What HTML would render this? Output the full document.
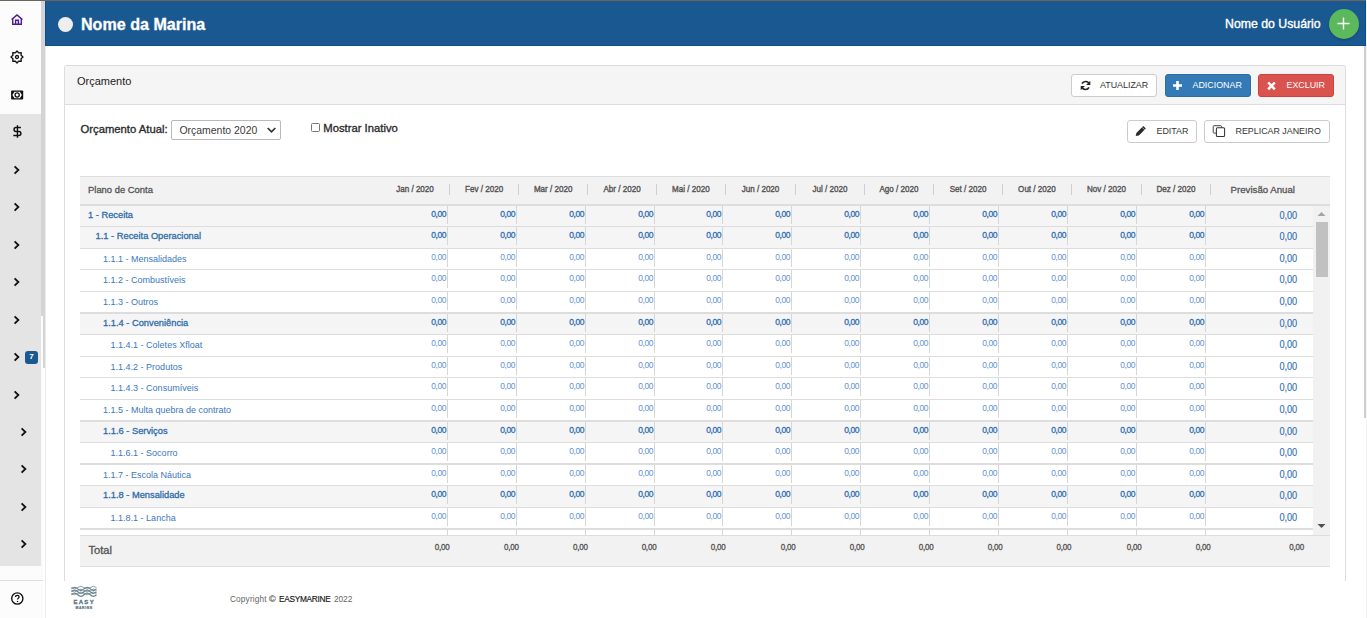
<!DOCTYPE html>
<html><head><meta charset="utf-8">
<style>
*{margin:0;padding:0;box-sizing:border-box}
html,body{width:1367px;height:618px;overflow:hidden;background:#fff;font-family:"Liberation Sans",sans-serif;color:#333}
.a{position:absolute}
#topline{left:0;top:0;width:1366px;height:1px;background:#6b645d}
#side{left:0;top:1px;width:41px;height:617px;background:#fcfcfc}
#sidegrey{left:0;top:114px;width:41px;height:452px;background:#e4e4e4}
#sidehr{left:0;top:580px;width:43px;height:1px;background:#dedede}
#sb1{left:41px;top:1px;width:4px;height:315px;background:#d4d4d4}
#sb2{left:43px;top:316px;width:2px;height:52px;background:#d4d4d4}
#sb3{left:41px;top:316px;width:2px;height:302px;background:#fbfbfb}
#sbline{left:45px;top:46px;width:1px;height:572px;background:#ececec}
#hdr{left:45px;top:1px;width:1321px;height:45px;background:#1a5891;border:1px solid #0f4d8c;border-top:none}
#hdrc{left:57.5px;top:16.5px;width:15px;height:15px;border-radius:50%;background:#eeeeee}
#hdrt{left:81px;top:13.6px;font-size:16.1px;font-weight:bold;color:#fff;line-height:20px;-webkit-text-stroke:0.3px #fff}
#user{left:1225px;top:15.7px;font-size:12.3px;color:#fff;line-height:16px;-webkit-text-stroke:0.35px #fff}
#plus{left:1329px;top:9px;width:30px;height:30px;border-radius:50%;background:#5cb85c;box-shadow:0 1px 2px rgba(0,0,0,.25)}
#pgsb{left:1364px;top:46px;width:2px;height:372px;background:#cdcdcd}
#rightedge{left:1366px;top:1px;width:1px;height:617px;background:#f3f3f3}
#panel{left:64px;top:65px;width:1282px;height:516px;border:1px solid #dddddd;border-bottom:none;border-radius:3px 3px 0 0}
#ph{left:65px;top:66px;width:1280px;height:39px;background:#f5f5f5;border-bottom:1px solid #dddddd;border-radius:2px 2px 0 0}
#ptitle{left:77px;top:74px;font-size:11px;line-height:14px;color:#222}
.btn{position:absolute;height:23px;border:1px solid #cccccc;border-radius:3px;background:#fff;font-size:8.9px;color:#333;line-height:21px}
.btn span{position:absolute;top:0}
.bp{background:#337ab7;border-color:#2e6da4;color:#fff}
.bd{background:#d9534f;border-color:#d43f3a;color:#fff}
.lbl{font-size:11.27px;color:#2a2a2a;line-height:14px;-webkit-text-stroke:0.32px #2a2a2a}
#sel{left:171px;top:120px;width:110px;height:20px;border:1px solid #b9b9b9;border-radius:2px;background:#fff}
#seltxt{left:179.5px;top:123.5px;font-size:10.45px;line-height:14px;color:#3a3a3a}
#chk{left:311px;top:123px;width:9px;height:9px;border:1px solid #767676;border-radius:1.5px;background:#fff}
#tbl{left:80px;top:176px;width:1250px;height:391px}
#th{left:0;top:0;width:1250px;height:30px;background:#f2f2f2;border-top:1px solid #dddddd;border-bottom:2px solid #dddddd}
.hpc{position:absolute;left:8px;top:6.8px;font-size:9.43px;color:#555;line-height:12px;-webkit-text-stroke:0.3px #555}
.hm{position:absolute;top:7.9px;font-size:8.07px;color:#555;line-height:10px;text-align:center;white-space:nowrap;-webkit-text-stroke:0.35px #555}
.hs{position:absolute;top:7.2px;width:1px;height:11px;background:#cfcfcf}
.hpa{position:absolute;left:1150.6px;top:7px;font-size:9.67px;color:#555;line-height:12px;-webkit-text-stroke:0.3px #555}
#bd{left:0;top:0;width:1233px;height:359px;overflow:hidden}
.ln{position:absolute;left:0;width:1233px;background:#dddddd}
.r{position:absolute;left:0;width:1233px;background:#fff}
.r.b{background:#f5f5f5}
.nm{position:absolute;top:3.9px;font-size:9px;line-height:12px;color:#3a78bb;white-space:nowrap}
.b .nm{font-size:9.3px;color:#2f6cab;top:2.6px;-webkit-text-stroke:0.3px #2f6cab}
.v{position:absolute;top:0;width:1px;height:18px;background:#d6d6d6}
.n{position:absolute;top:3.3px;font-size:8.5px;line-height:10px;letter-spacing:-0.4px;color:#6393cf}
.b .n{color:#2f6fb2;-webkit-text-stroke:0.3px #2f6fb2}
.pa{position:absolute;right:16px;top:3.9px;font-size:9.2px;line-height:12px;letter-spacing:-0.1px;color:#2f6fb5;-webkit-text-stroke:0.12px #2f6fb5}
#scr{left:1233px;top:30px;width:17px;height:329px;background:#f1f1f1}
#thumb{left:1235.5px;top:46px;width:12.5px;height:55px;background:#c1c1c1}
#tf{left:0;top:359px;width:1250px;height:32px;background:#f2f2f2;border-top:1px solid #dddddd;border-bottom:1px solid #dddddd}
.tt{position:absolute;left:8.5px;top:8.3px;font-size:11.1px;color:#555;line-height:12px;-webkit-text-stroke:0.32px #555}
.tn{position:absolute;top:6.8px;font-size:8px;letter-spacing:-0.2px;color:#555;line-height:10px;-webkit-text-stroke:0.3px #555}
.cp{top:593px;font-size:8.3px;line-height:12px;color:#666;white-space:nowrap}
.chev{position:absolute;width:8px;height:10px}
.n{transform:scaleY(1.13);transform-origin:50% 7.94px}
.hm{transform:scaleY(1.13);transform-origin:50% 7.79px}
.tn{transform:scaleY(1.13);transform-origin:50% 7.77px}
.pa{transform:scaleY(1.1);transform-origin:50% 9.19px}
</style></head><body>
<div class="a" id="topline"></div>
<div class="a" id="side"></div>
<div class="a" id="sidegrey"></div>
<div class="a" id="sb1"></div><div class="a" id="sb2"></div><div class="a" id="sb3"></div>
<div class="a" id="sidehr"></div>
<div class="a" id="sbline"></div>
<!-- sidebar icons -->
<svg class="a" style="left:9px;top:12px" width="16" height="15" viewBox="0 0 16 15"><path d="M2.6 7.6 L8 3 L13.4 7.6 M3.7 6.8 V12.3 H12.3 V6.8 M6.6 12.3 V8.3 H9.4 V12.3" fill="none" stroke="#4b1b8f" stroke-width="1.4" stroke-linejoin="miter"/></svg>
<svg class="a" style="left:9.3px;top:48.7px" width="16" height="16" viewBox="0 0 16 16"><path d="M8.00 2.00 L9.68 3.93 L12.24 3.76 L12.07 6.32 L14.00 8.00 L12.07 9.68 L12.24 12.24 L9.68 12.07 L8.00 14.00 L6.32 12.07 L3.76 12.24 L3.93 9.68 L2.00 8.00 L3.93 6.32 L3.76 3.76 L6.32 3.93 Z" fill="none" stroke="#111" stroke-width="1.35" stroke-linejoin="round"/><circle cx="8" cy="8" r="1.5" fill="none" stroke="#111" stroke-width="1.3"/></svg>
<svg class="a" style="left:9px;top:86.5px" width="16" height="16" viewBox="0 0 16 16"><rect x="2.1" y="3.4" width="12.1" height="9.1" rx="0.9" fill="#111"/><path d="M3.4 8 L5.5 4.7 H10.8 L12.9 8 L10.8 11.2 H5.5 Z" fill="#fff"/><circle cx="8.15" cy="8" r="2.1" fill="none" stroke="#111" stroke-width="1.3"/></svg>
<svg class="a" style="left:11px;top:124px" width="12" height="15" viewBox="0 0 12 15"><path d="M9.9 3.5 H5.0 A1.95 1.95 0 0 0 5.0 7.4 H7.9 A2.0 2.0 0 0 1 7.9 11.4 H2.3" fill="none" stroke="#111" stroke-width="1.45"/><path d="M6.45 1.2 V13.8" stroke="#111" stroke-width="1.4"/></svg>
<svg class="a" style="left:13.2px;top:164.8px" width="8" height="10" viewBox="0 0 8 10"><path d="M1.6 1.3 L5.4 5 L1.6 8.7" fill="none" stroke="#111" stroke-width="1.8"/></svg><svg class="a" style="left:13.2px;top:202.3px" width="8" height="10" viewBox="0 0 8 10"><path d="M1.6 1.3 L5.4 5 L1.6 8.7" fill="none" stroke="#111" stroke-width="1.8"/></svg><svg class="a" style="left:13.2px;top:239.8px" width="8" height="10" viewBox="0 0 8 10"><path d="M1.6 1.3 L5.4 5 L1.6 8.7" fill="none" stroke="#111" stroke-width="1.8"/></svg><svg class="a" style="left:13.2px;top:277.3px" width="8" height="10" viewBox="0 0 8 10"><path d="M1.6 1.3 L5.4 5 L1.6 8.7" fill="none" stroke="#111" stroke-width="1.8"/></svg><svg class="a" style="left:13.2px;top:314.8px" width="8" height="10" viewBox="0 0 8 10"><path d="M1.6 1.3 L5.4 5 L1.6 8.7" fill="none" stroke="#111" stroke-width="1.8"/></svg><svg class="a" style="left:13.2px;top:352px" width="8" height="10" viewBox="0 0 8 10"><path d="M1.6 1.3 L5.4 5 L1.6 8.7" fill="none" stroke="#111" stroke-width="1.8"/></svg><svg class="a" style="left:13.2px;top:389.8px" width="8" height="10" viewBox="0 0 8 10"><path d="M1.6 1.3 L5.4 5 L1.6 8.7" fill="none" stroke="#111" stroke-width="1.8"/></svg><svg class="a" style="left:20.2px;top:427px" width="8" height="10" viewBox="0 0 8 10"><path d="M1.6 1.3 L5.4 5 L1.6 8.7" fill="none" stroke="#111" stroke-width="1.8"/></svg><svg class="a" style="left:20.2px;top:464px" width="8" height="10" viewBox="0 0 8 10"><path d="M1.6 1.3 L5.4 5 L1.6 8.7" fill="none" stroke="#111" stroke-width="1.8"/></svg><svg class="a" style="left:20.2px;top:501.5px" width="8" height="10" viewBox="0 0 8 10"><path d="M1.6 1.3 L5.4 5 L1.6 8.7" fill="none" stroke="#111" stroke-width="1.8"/></svg><svg class="a" style="left:20.2px;top:539px" width="8" height="10" viewBox="0 0 8 10"><path d="M1.6 1.3 L5.4 5 L1.6 8.7" fill="none" stroke="#111" stroke-width="1.8"/></svg>
<div class="a" style="left:25px;top:351px;width:13px;height:13px;border-radius:3px;background:#1a5891;color:#fff;font-size:8px;font-weight:bold;line-height:11.5px;text-align:center">7</div>
<svg class="a" style="left:10px;top:591px" width="15" height="15" viewBox="0 0 15 15"><circle cx="7.3" cy="7.5" r="5.6" fill="none" stroke="#111" stroke-width="1.4"/><path d="M5.5 6.1 C5.5 4.9 6.3 4.3 7.3 4.3 C8.3 4.3 9.1 5 9.1 5.9 C9.1 7.1 7.5 7.2 7.5 8.6" fill="none" stroke="#111" stroke-width="1.3"/><circle cx="7.5" cy="10.4" r="0.75" fill="#111"/></svg>
<!-- header -->
<div class="a" id="hdr"></div>
<div class="a" id="hdrc"></div>
<div class="a" id="hdrt">Nome da Marina</div>
<div class="a" id="user">Nome do Usuário</div>
<div class="a" id="plus"></div>
<svg class="a" style="left:1337px;top:17px" width="13" height="13" viewBox="0 0 13 13"><path d="M6.5 0.5 V12.5 M0.5 6.5 H12.5" stroke="#fff" stroke-width="1.4"/></svg>
<div class="a" id="pgsb"></div>
<div class="a" id="rightedge"></div>
<!-- panel -->
<div class="a" id="panel"></div>
<div class="a" id="ph"></div>
<div class="a" id="ptitle">Orçamento</div>
<div class="btn" style="left:1071px;top:74px;width:86px">
 <svg class="a" style="left:8px;top:5px" width="11" height="11" viewBox="0 0 11 11"><path d="M9.3 4.2 A4 4 0 0 0 2 3.6 M1.7 6.8 A4 4 0 0 0 9 7.4" fill="none" stroke="#222" stroke-width="1.7"/><path d="M10.3 0.8 V5 H6.1 Z M0.7 10.2 V6 H4.9 Z" fill="#222"/></svg>
 <span style="left:28px">ATUALIZAR</span></div>
<div class="btn bp" style="left:1165px;top:74px;width:86px">
 <svg class="a" style="left:6px;top:5px" width="11" height="11" viewBox="0 0 11 11"><path d="M5.5 1 V10 M1 5.5 H10" stroke="#fff" stroke-width="2.6"/></svg>
 <span style="left:26.5px">ADICIONAR</span></div>
<div class="btn bd" style="left:1258px;top:74px;width:76px">
 <svg class="a" style="left:6.5px;top:6px" width="11" height="10" viewBox="0 0 11 10"><path d="M2.2 1.5 L8.8 8.3 M8.8 1.5 L2.2 8.3" stroke="#fff" stroke-width="2.5"/></svg>
 <span style="left:27.5px">EXCLUIR</span></div>
<div class="a lbl" style="left:80.5px;top:122px">Orçamento Atual:</div>
<div class="a" id="sel"></div>
<div class="a" id="seltxt">Orçamento 2020</div>
<svg class="a" style="left:265.5px;top:126px" width="11" height="8" viewBox="0 0 11 8"><path d="M1.7 2 L5.5 5.8 L9.3 2" fill="none" stroke="#333" stroke-width="1.75"/></svg>
<div class="a" id="chk"></div>
<div class="a lbl" style="left:323.3px;top:121px">Mostrar Inativo</div>
<div class="btn" style="left:1127px;top:120px;width:70px">
 <svg class="a" style="left:5.6px;top:4.1px" width="13" height="13" viewBox="0 0 13 13"><path d="M1.7 11.1 L2.4 8 L9.3 1.1 L11.8 3.6 L4.9 10.4 Z" fill="#2a2a2a"/><path d="M8.1 2.3 L10.6 4.8" stroke="#fff" stroke-width="0.6"/></svg>
 <span style="left:28.5px">EDITAR</span></div>
<div class="btn" style="left:1204px;top:120px;width:126px">
 <svg class="a" style="left:6px;top:3.4px" width="15" height="14" viewBox="0 0 15 14"><rect x="2.2" y="1.7" width="8.4" height="7.4" rx="0.8" fill="none" stroke="#444" stroke-width="1"/><rect x="5.4" y="3.8" width="8.2" height="8.7" rx="1" fill="#fff" stroke="#333" stroke-width="1.05"/></svg>
 <span style="left:30.5px">REPLICAR JANEIRO</span></div>
<!-- table -->
<div class="a" id="tbl">
 <div class="a" id="th"><span class="hpc">Plano de Conta</span><span class="hm" style="left:300.4px;width:69.20000000000005px">Jan / 2020</span><span class="hs" style="left:369px"></span><span class="hm" style="left:369.6px;width:69.10000000000002px">Fev / 2020</span><span class="hs" style="left:438px"></span><span class="hm" style="left:438.70000000000005px;width:69.0px">Mar / 2020</span><span class="hs" style="left:507px"></span><span class="hm" style="left:507.70000000000005px;width:68.69999999999993px">Abr / 2020</span><span class="hs" style="left:576px"></span><span class="hm" style="left:576.4px;width:69.10000000000002px">Mai / 2020</span><span class="hs" style="left:645px"></span><span class="hm" style="left:645.5px;width:70.0px">Jun / 2020</span><span class="hs" style="left:715px"></span><span class="hm" style="left:715.5px;width:69.0px">Jul / 2020</span><span class="hs" style="left:784px"></span><span class="hm" style="left:784.5px;width:69.0px">Ago / 2020</span><span class="hs" style="left:853px"></span><span class="hm" style="left:853.5px;width:69.10000000000002px">Set / 2020</span><span class="hs" style="left:922px"></span><span class="hm" style="left:922.6px;width:68.69999999999993px">Out / 2020</span><span class="hs" style="left:991px"></span><span class="hm" style="left:991.3px;width:70.20000000000005px">Nov / 2020</span><span class="hs" style="left:1061px"></span><span class="hm" style="left:1061.5px;width:69.0px">Dez / 2020</span><span class="hs" style="left:1130px"></span><span class="hpa">Previsão Anual</span></div>
 <div class="a" id="bd">
<div class="ln" style="top:28px;height:2px"></div><div class="r b" style="top:30px;height:20px"><span class="nm" style="left:8px">1 - Receita</span><span class="v" style="left:367px"></span><span class="n" style="right:866.8px">0,00</span><span class="v" style="left:436px"></span><span class="n" style="right:797.8px">0,00</span><span class="v" style="left:505px"></span><span class="n" style="right:728.8px">0,00</span><span class="v" style="left:574px"></span><span class="n" style="right:659.8px">0,00</span><span class="v" style="left:642px"></span><span class="n" style="right:591.8px">0,00</span><span class="v" style="left:711px"></span><span class="n" style="right:522.8px">0,00</span><span class="v" style="left:780px"></span><span class="n" style="right:453.8px">0,00</span><span class="v" style="left:849px"></span><span class="n" style="right:384.8px">0,00</span><span class="v" style="left:918px"></span><span class="n" style="right:315.8px">0,00</span><span class="v" style="left:987px"></span><span class="n" style="right:246.8px">0,00</span><span class="v" style="left:1056px"></span><span class="n" style="right:177.8px">0,00</span><span class="v" style="left:1125px"></span><span class="n" style="right:108.8px">0,00</span><span class="pa">0,00</span></div>
<div class="ln" style="top:50px;height:1px"></div><div class="r b" style="top:51px;height:21px"><span class="nm" style="left:15.599999999999994px">1.1 - Receita Operacional</span><span class="v" style="left:367px"></span><span class="n" style="right:866.8px">0,00</span><span class="v" style="left:436px"></span><span class="n" style="right:797.8px">0,00</span><span class="v" style="left:505px"></span><span class="n" style="right:728.8px">0,00</span><span class="v" style="left:574px"></span><span class="n" style="right:659.8px">0,00</span><span class="v" style="left:642px"></span><span class="n" style="right:591.8px">0,00</span><span class="v" style="left:711px"></span><span class="n" style="right:522.8px">0,00</span><span class="v" style="left:780px"></span><span class="n" style="right:453.8px">0,00</span><span class="v" style="left:849px"></span><span class="n" style="right:384.8px">0,00</span><span class="v" style="left:918px"></span><span class="n" style="right:315.8px">0,00</span><span class="v" style="left:987px"></span><span class="n" style="right:246.8px">0,00</span><span class="v" style="left:1056px"></span><span class="n" style="right:177.8px">0,00</span><span class="v" style="left:1125px"></span><span class="n" style="right:108.8px">0,00</span><span class="pa">0,00</span></div>
<div class="ln" style="top:72px;height:1px"></div><div class="r" style="top:73px;height:20px"><span class="nm" style="left:23px">1.1.1 - Mensalidades</span><span class="v" style="left:367px"></span><span class="n" style="right:866.8px">0,00</span><span class="v" style="left:436px"></span><span class="n" style="right:797.8px">0,00</span><span class="v" style="left:505px"></span><span class="n" style="right:728.8px">0,00</span><span class="v" style="left:574px"></span><span class="n" style="right:659.8px">0,00</span><span class="v" style="left:642px"></span><span class="n" style="right:591.8px">0,00</span><span class="v" style="left:711px"></span><span class="n" style="right:522.8px">0,00</span><span class="v" style="left:780px"></span><span class="n" style="right:453.8px">0,00</span><span class="v" style="left:849px"></span><span class="n" style="right:384.8px">0,00</span><span class="v" style="left:918px"></span><span class="n" style="right:315.8px">0,00</span><span class="v" style="left:987px"></span><span class="n" style="right:246.8px">0,00</span><span class="v" style="left:1056px"></span><span class="n" style="right:177.8px">0,00</span><span class="v" style="left:1125px"></span><span class="n" style="right:108.8px">0,00</span><span class="pa">0,00</span></div>
<div class="ln" style="top:93px;height:1px"></div><div class="r" style="top:94px;height:21px"><span class="nm" style="left:23px">1.1.2 - Combustíveis</span><span class="v" style="left:367px"></span><span class="n" style="right:866.8px">0,00</span><span class="v" style="left:436px"></span><span class="n" style="right:797.8px">0,00</span><span class="v" style="left:505px"></span><span class="n" style="right:728.8px">0,00</span><span class="v" style="left:574px"></span><span class="n" style="right:659.8px">0,00</span><span class="v" style="left:642px"></span><span class="n" style="right:591.8px">0,00</span><span class="v" style="left:711px"></span><span class="n" style="right:522.8px">0,00</span><span class="v" style="left:780px"></span><span class="n" style="right:453.8px">0,00</span><span class="v" style="left:849px"></span><span class="n" style="right:384.8px">0,00</span><span class="v" style="left:918px"></span><span class="n" style="right:315.8px">0,00</span><span class="v" style="left:987px"></span><span class="n" style="right:246.8px">0,00</span><span class="v" style="left:1056px"></span><span class="n" style="right:177.8px">0,00</span><span class="v" style="left:1125px"></span><span class="n" style="right:108.8px">0,00</span><span class="pa">0,00</span></div>
<div class="ln" style="top:115px;height:1px"></div><div class="r" style="top:116px;height:20px"><span class="nm" style="left:23px">1.1.3 - Outros</span><span class="v" style="left:367px"></span><span class="n" style="right:866.8px">0,00</span><span class="v" style="left:436px"></span><span class="n" style="right:797.8px">0,00</span><span class="v" style="left:505px"></span><span class="n" style="right:728.8px">0,00</span><span class="v" style="left:574px"></span><span class="n" style="right:659.8px">0,00</span><span class="v" style="left:642px"></span><span class="n" style="right:591.8px">0,00</span><span class="v" style="left:711px"></span><span class="n" style="right:522.8px">0,00</span><span class="v" style="left:780px"></span><span class="n" style="right:453.8px">0,00</span><span class="v" style="left:849px"></span><span class="n" style="right:384.8px">0,00</span><span class="v" style="left:918px"></span><span class="n" style="right:315.8px">0,00</span><span class="v" style="left:987px"></span><span class="n" style="right:246.8px">0,00</span><span class="v" style="left:1056px"></span><span class="n" style="right:177.8px">0,00</span><span class="v" style="left:1125px"></span><span class="n" style="right:108.8px">0,00</span><span class="pa">0,00</span></div>
<div class="ln" style="top:136px;height:2px"></div><div class="r b" style="top:138px;height:20px"><span class="nm" style="left:23px">1.1.4 - Conveniência</span><span class="v" style="left:367px"></span><span class="n" style="right:866.8px">0,00</span><span class="v" style="left:436px"></span><span class="n" style="right:797.8px">0,00</span><span class="v" style="left:505px"></span><span class="n" style="right:728.8px">0,00</span><span class="v" style="left:574px"></span><span class="n" style="right:659.8px">0,00</span><span class="v" style="left:642px"></span><span class="n" style="right:591.8px">0,00</span><span class="v" style="left:711px"></span><span class="n" style="right:522.8px">0,00</span><span class="v" style="left:780px"></span><span class="n" style="right:453.8px">0,00</span><span class="v" style="left:849px"></span><span class="n" style="right:384.8px">0,00</span><span class="v" style="left:918px"></span><span class="n" style="right:315.8px">0,00</span><span class="v" style="left:987px"></span><span class="n" style="right:246.8px">0,00</span><span class="v" style="left:1056px"></span><span class="n" style="right:177.8px">0,00</span><span class="v" style="left:1125px"></span><span class="n" style="right:108.8px">0,00</span><span class="pa">0,00</span></div>
<div class="ln" style="top:158px;height:1px"></div><div class="r" style="top:159px;height:21px"><span class="nm" style="left:30.599999999999994px">1.1.4.1 - Coletes Xfloat</span><span class="v" style="left:367px"></span><span class="n" style="right:866.8px">0,00</span><span class="v" style="left:436px"></span><span class="n" style="right:797.8px">0,00</span><span class="v" style="left:505px"></span><span class="n" style="right:728.8px">0,00</span><span class="v" style="left:574px"></span><span class="n" style="right:659.8px">0,00</span><span class="v" style="left:642px"></span><span class="n" style="right:591.8px">0,00</span><span class="v" style="left:711px"></span><span class="n" style="right:522.8px">0,00</span><span class="v" style="left:780px"></span><span class="n" style="right:453.8px">0,00</span><span class="v" style="left:849px"></span><span class="n" style="right:384.8px">0,00</span><span class="v" style="left:918px"></span><span class="n" style="right:315.8px">0,00</span><span class="v" style="left:987px"></span><span class="n" style="right:246.8px">0,00</span><span class="v" style="left:1056px"></span><span class="n" style="right:177.8px">0,00</span><span class="v" style="left:1125px"></span><span class="n" style="right:108.8px">0,00</span><span class="pa">0,00</span></div>
<div class="ln" style="top:180px;height:1px"></div><div class="r" style="top:181px;height:20px"><span class="nm" style="left:30.599999999999994px">1.1.4.2 - Produtos</span><span class="v" style="left:367px"></span><span class="n" style="right:866.8px">0,00</span><span class="v" style="left:436px"></span><span class="n" style="right:797.8px">0,00</span><span class="v" style="left:505px"></span><span class="n" style="right:728.8px">0,00</span><span class="v" style="left:574px"></span><span class="n" style="right:659.8px">0,00</span><span class="v" style="left:642px"></span><span class="n" style="right:591.8px">0,00</span><span class="v" style="left:711px"></span><span class="n" style="right:522.8px">0,00</span><span class="v" style="left:780px"></span><span class="n" style="right:453.8px">0,00</span><span class="v" style="left:849px"></span><span class="n" style="right:384.8px">0,00</span><span class="v" style="left:918px"></span><span class="n" style="right:315.8px">0,00</span><span class="v" style="left:987px"></span><span class="n" style="right:246.8px">0,00</span><span class="v" style="left:1056px"></span><span class="n" style="right:177.8px">0,00</span><span class="v" style="left:1125px"></span><span class="n" style="right:108.8px">0,00</span><span class="pa">0,00</span></div>
<div class="ln" style="top:201px;height:1px"></div><div class="r" style="top:202px;height:21px"><span class="nm" style="left:30.599999999999994px">1.1.4.3 - Consumíveis</span><span class="v" style="left:367px"></span><span class="n" style="right:866.8px">0,00</span><span class="v" style="left:436px"></span><span class="n" style="right:797.8px">0,00</span><span class="v" style="left:505px"></span><span class="n" style="right:728.8px">0,00</span><span class="v" style="left:574px"></span><span class="n" style="right:659.8px">0,00</span><span class="v" style="left:642px"></span><span class="n" style="right:591.8px">0,00</span><span class="v" style="left:711px"></span><span class="n" style="right:522.8px">0,00</span><span class="v" style="left:780px"></span><span class="n" style="right:453.8px">0,00</span><span class="v" style="left:849px"></span><span class="n" style="right:384.8px">0,00</span><span class="v" style="left:918px"></span><span class="n" style="right:315.8px">0,00</span><span class="v" style="left:987px"></span><span class="n" style="right:246.8px">0,00</span><span class="v" style="left:1056px"></span><span class="n" style="right:177.8px">0,00</span><span class="v" style="left:1125px"></span><span class="n" style="right:108.8px">0,00</span><span class="pa">0,00</span></div>
<div class="ln" style="top:223px;height:1px"></div><div class="r" style="top:224px;height:20px"><span class="nm" style="left:23px">1.1.5 - Multa quebra de contrato</span><span class="v" style="left:367px"></span><span class="n" style="right:866.8px">0,00</span><span class="v" style="left:436px"></span><span class="n" style="right:797.8px">0,00</span><span class="v" style="left:505px"></span><span class="n" style="right:728.8px">0,00</span><span class="v" style="left:574px"></span><span class="n" style="right:659.8px">0,00</span><span class="v" style="left:642px"></span><span class="n" style="right:591.8px">0,00</span><span class="v" style="left:711px"></span><span class="n" style="right:522.8px">0,00</span><span class="v" style="left:780px"></span><span class="n" style="right:453.8px">0,00</span><span class="v" style="left:849px"></span><span class="n" style="right:384.8px">0,00</span><span class="v" style="left:918px"></span><span class="n" style="right:315.8px">0,00</span><span class="v" style="left:987px"></span><span class="n" style="right:246.8px">0,00</span><span class="v" style="left:1056px"></span><span class="n" style="right:177.8px">0,00</span><span class="v" style="left:1125px"></span><span class="n" style="right:108.8px">0,00</span><span class="pa">0,00</span></div>
<div class="ln" style="top:244px;height:2px"></div><div class="r b" style="top:246px;height:20px"><span class="nm" style="left:23px">1.1.6 - Serviços</span><span class="v" style="left:367px"></span><span class="n" style="right:866.8px">0,00</span><span class="v" style="left:436px"></span><span class="n" style="right:797.8px">0,00</span><span class="v" style="left:505px"></span><span class="n" style="right:728.8px">0,00</span><span class="v" style="left:574px"></span><span class="n" style="right:659.8px">0,00</span><span class="v" style="left:642px"></span><span class="n" style="right:591.8px">0,00</span><span class="v" style="left:711px"></span><span class="n" style="right:522.8px">0,00</span><span class="v" style="left:780px"></span><span class="n" style="right:453.8px">0,00</span><span class="v" style="left:849px"></span><span class="n" style="right:384.8px">0,00</span><span class="v" style="left:918px"></span><span class="n" style="right:315.8px">0,00</span><span class="v" style="left:987px"></span><span class="n" style="right:246.8px">0,00</span><span class="v" style="left:1056px"></span><span class="n" style="right:177.8px">0,00</span><span class="v" style="left:1125px"></span><span class="n" style="right:108.8px">0,00</span><span class="pa">0,00</span></div>
<div class="ln" style="top:266px;height:1px"></div><div class="r" style="top:267px;height:20px"><span class="nm" style="left:30.599999999999994px">1.1.6.1 - Socorro</span><span class="v" style="left:367px"></span><span class="n" style="right:866.8px">0,00</span><span class="v" style="left:436px"></span><span class="n" style="right:797.8px">0,00</span><span class="v" style="left:505px"></span><span class="n" style="right:728.8px">0,00</span><span class="v" style="left:574px"></span><span class="n" style="right:659.8px">0,00</span><span class="v" style="left:642px"></span><span class="n" style="right:591.8px">0,00</span><span class="v" style="left:711px"></span><span class="n" style="right:522.8px">0,00</span><span class="v" style="left:780px"></span><span class="n" style="right:453.8px">0,00</span><span class="v" style="left:849px"></span><span class="n" style="right:384.8px">0,00</span><span class="v" style="left:918px"></span><span class="n" style="right:315.8px">0,00</span><span class="v" style="left:987px"></span><span class="n" style="right:246.8px">0,00</span><span class="v" style="left:1056px"></span><span class="n" style="right:177.8px">0,00</span><span class="v" style="left:1125px"></span><span class="n" style="right:108.8px">0,00</span><span class="pa">0,00</span></div>
<div class="ln" style="top:287px;height:2px"></div><div class="r" style="top:289px;height:20px"><span class="nm" style="left:23px">1.1.7 - Escola Náutica</span><span class="v" style="left:367px"></span><span class="n" style="right:866.8px">0,00</span><span class="v" style="left:436px"></span><span class="n" style="right:797.8px">0,00</span><span class="v" style="left:505px"></span><span class="n" style="right:728.8px">0,00</span><span class="v" style="left:574px"></span><span class="n" style="right:659.8px">0,00</span><span class="v" style="left:642px"></span><span class="n" style="right:591.8px">0,00</span><span class="v" style="left:711px"></span><span class="n" style="right:522.8px">0,00</span><span class="v" style="left:780px"></span><span class="n" style="right:453.8px">0,00</span><span class="v" style="left:849px"></span><span class="n" style="right:384.8px">0,00</span><span class="v" style="left:918px"></span><span class="n" style="right:315.8px">0,00</span><span class="v" style="left:987px"></span><span class="n" style="right:246.8px">0,00</span><span class="v" style="left:1056px"></span><span class="n" style="right:177.8px">0,00</span><span class="v" style="left:1125px"></span><span class="n" style="right:108.8px">0,00</span><span class="pa">0,00</span></div>
<div class="ln" style="top:309px;height:1px"></div><div class="r b" style="top:310px;height:21px"><span class="nm" style="left:23px">1.1.8 - Mensalidade</span><span class="v" style="left:367px"></span><span class="n" style="right:866.8px">0,00</span><span class="v" style="left:436px"></span><span class="n" style="right:797.8px">0,00</span><span class="v" style="left:505px"></span><span class="n" style="right:728.8px">0,00</span><span class="v" style="left:574px"></span><span class="n" style="right:659.8px">0,00</span><span class="v" style="left:642px"></span><span class="n" style="right:591.8px">0,00</span><span class="v" style="left:711px"></span><span class="n" style="right:522.8px">0,00</span><span class="v" style="left:780px"></span><span class="n" style="right:453.8px">0,00</span><span class="v" style="left:849px"></span><span class="n" style="right:384.8px">0,00</span><span class="v" style="left:918px"></span><span class="n" style="right:315.8px">0,00</span><span class="v" style="left:987px"></span><span class="n" style="right:246.8px">0,00</span><span class="v" style="left:1056px"></span><span class="n" style="right:177.8px">0,00</span><span class="v" style="left:1125px"></span><span class="n" style="right:108.8px">0,00</span><span class="pa">0,00</span></div>
<div class="ln" style="top:331px;height:1px"></div><div class="r" style="top:332px;height:20px"><span class="nm" style="left:30.599999999999994px">1.1.8.1 - Lancha</span><span class="v" style="left:367px"></span><span class="n" style="right:866.8px">0,00</span><span class="v" style="left:436px"></span><span class="n" style="right:797.8px">0,00</span><span class="v" style="left:505px"></span><span class="n" style="right:728.8px">0,00</span><span class="v" style="left:574px"></span><span class="n" style="right:659.8px">0,00</span><span class="v" style="left:642px"></span><span class="n" style="right:591.8px">0,00</span><span class="v" style="left:711px"></span><span class="n" style="right:522.8px">0,00</span><span class="v" style="left:780px"></span><span class="n" style="right:453.8px">0,00</span><span class="v" style="left:849px"></span><span class="n" style="right:384.8px">0,00</span><span class="v" style="left:918px"></span><span class="n" style="right:315.8px">0,00</span><span class="v" style="left:987px"></span><span class="n" style="right:246.8px">0,00</span><span class="v" style="left:1056px"></span><span class="n" style="right:177.8px">0,00</span><span class="v" style="left:1125px"></span><span class="n" style="right:108.8px">0,00</span><span class="pa">0,00</span></div>
<div class="ln" style="top:352px;height:2px"></div><div class="r" style="top:354px;height:21px"><span class="nm" style="left:23px">1.1.9 - Outros</span><span class="v" style="left:367px"></span><span class="n" style="right:866.8px">0,00</span><span class="v" style="left:436px"></span><span class="n" style="right:797.8px">0,00</span><span class="v" style="left:505px"></span><span class="n" style="right:728.8px">0,00</span><span class="v" style="left:574px"></span><span class="n" style="right:659.8px">0,00</span><span class="v" style="left:642px"></span><span class="n" style="right:591.8px">0,00</span><span class="v" style="left:711px"></span><span class="n" style="right:522.8px">0,00</span><span class="v" style="left:780px"></span><span class="n" style="right:453.8px">0,00</span><span class="v" style="left:849px"></span><span class="n" style="right:384.8px">0,00</span><span class="v" style="left:918px"></span><span class="n" style="right:315.8px">0,00</span><span class="v" style="left:987px"></span><span class="n" style="right:246.8px">0,00</span><span class="v" style="left:1056px"></span><span class="n" style="right:177.8px">0,00</span><span class="v" style="left:1125px"></span><span class="n" style="right:108.8px">0,00</span><span class="pa">0,00</span></div>
 </div>
 <div class="a" id="scr"></div>
 <div class="a" id="thumb"></div>
 <svg class="a" style="left:1237px;top:35px" width="9" height="6" viewBox="0 0 9 6"><path d="M0.5 5 L4.5 1 L8.5 5 Z" fill="#a3a3a3"/></svg>
 <svg class="a" style="left:1236.5px;top:347px" width="9" height="6" viewBox="0 0 9 6"><path d="M0.5 1 L4.5 5 L8.5 1 Z" fill="#505050"/></svg>
 <div class="a" id="tf"><span class="tt">Total</span><span class="tn" style="right:880.4px">0,00</span><span class="tn" style="right:811.3px">0,00</span><span class="tn" style="right:742.3px">0,00</span><span class="tn" style="right:673.6px">0,00</span><span class="tn" style="right:604.5px">0,00</span><span class="tn" style="right:534.5px">0,00</span><span class="tn" style="right:465.5px">0,00</span><span class="tn" style="right:396.5px">0,00</span><span class="tn" style="right:327.4px">0,00</span><span class="tn" style="right:258.70000000000005px">0,00</span><span class="tn" style="right:188.5px">0,00</span><span class="tn" style="right:119.5px">0,00</span><span class="tn" style="right:26px">0,00</span></div>
</div>
<!-- footer -->
<svg class="a" style="left:71px;top:585px" width="26" height="26" viewBox="0 0 26 26"><g fill="none" stroke="#6d8792" stroke-width="1.3"><path d="M0.5 3.9000000000000004 Q3.6 0.7000000000000002 6.75 3.9000000000000004 T13 3.9000000000000004 T19.25 3.9000000000000004 T25.5 3.9000000000000004"/><path d="M0.5 2.6 Q3.6 5.4 6.75 2.6 T13 2.6 T19.25 2.6 T25.5 2.6" stroke-width="0.8"/><path d="M0.5 6.8 Q3.6 3.6 6.75 6.8 T13 6.8 T19.25 6.8 T25.5 6.8"/><path d="M0.5 5.5 Q3.6 8.3 6.75 5.5 T13 5.5 T19.25 5.5 T25.5 5.5" stroke-width="0.8"/><path d="M0.5 9.700000000000001 Q3.6 6.5 6.75 9.700000000000001 T13 9.700000000000001 T19.25 9.700000000000001 T25.5 9.700000000000001"/><path d="M0.5 8.4 Q3.6 11.2 6.75 8.4 T13 8.4 T19.25 8.4 T25.5 8.4" stroke-width="0.8"/></g><text x="13.2" y="18.6" font-size="6" font-weight="bold" text-anchor="middle" fill="#5a737f" stroke="#5a737f" stroke-width="0.3" font-family="Liberation Sans" letter-spacing="1.3">EASY</text><text x="13.2" y="23.6" font-size="3.4" font-weight="bold" text-anchor="middle" fill="#5a737f" stroke="#5a737f" stroke-width="0.2" font-family="Liberation Sans" letter-spacing="0.7">MARINE</text></svg>
<div class="a cp" style="left:230px;letter-spacing:0.13px">Copyright</div><div class="a cp" style="left:269px;font-size:9px;top:592.5px;-webkit-text-stroke:0.2px #666">©</div><div class="a cp" style="left:279px;letter-spacing:-0.3px;color:#151515;-webkit-text-stroke:0.15px #151515">EASYMARINE</div><div class="a cp" style="left:333.9px">2022</div>
</body></html>
